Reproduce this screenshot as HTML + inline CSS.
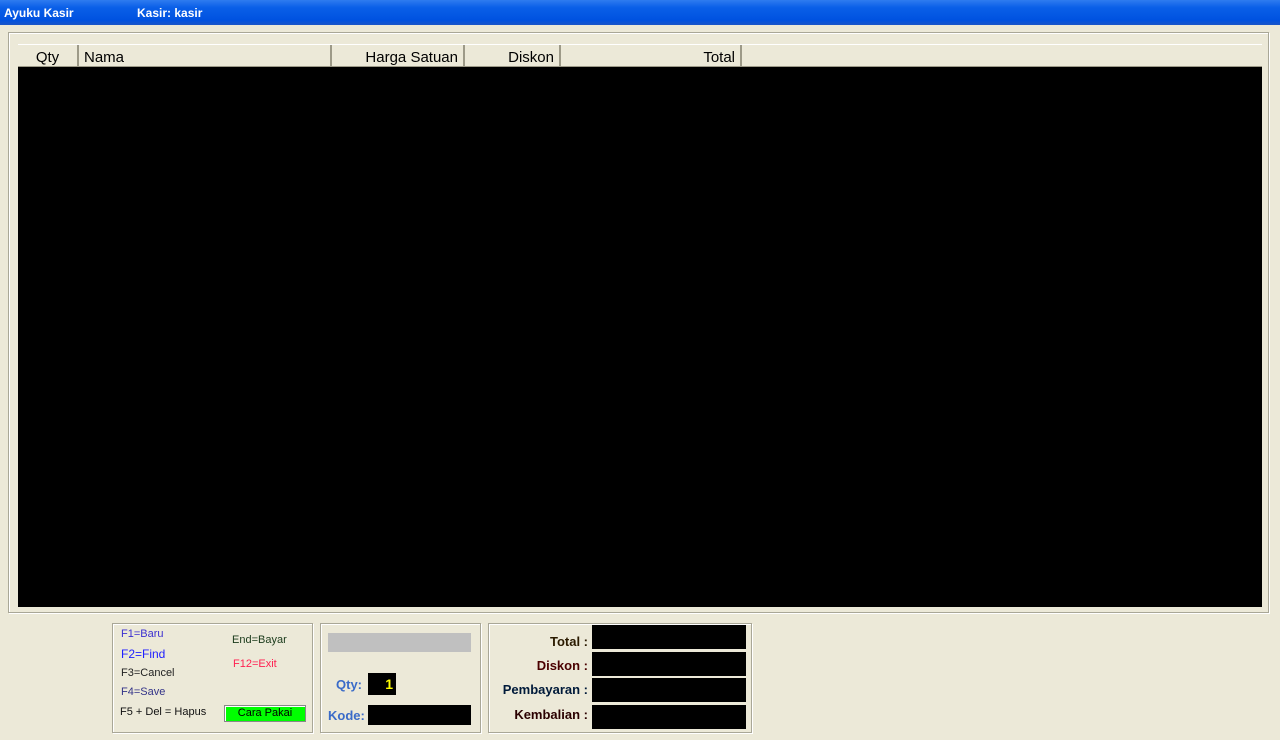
<!DOCTYPE html>
<html><head><style>
body{margin:0;width:1280px;height:740px;background:#ece9d8;position:relative;overflow:hidden;font-family:"Liberation Sans",Tahoma,sans-serif;}
.a{position:absolute;}
.title{left:0;top:0;width:1280px;height:25px;background:linear-gradient(#2f7cf0,#0a5fe8 30%,#0052e0 80%,#1a55c8);color:#fff;font-weight:bold;font-size:12px;}
.box{border:1px solid #a9a797;box-shadow:inset 1px 1px 0 #fff,1px 1px 0 #fff;}
.hd{top:44px;height:21px;background:#ece9d8;border-top:1px solid #fff;border-bottom:2px solid #9d9a88;font-size:15px;color:#000;}
.hd div{position:absolute;top:0;height:21px;line-height:25px;border-right:2px solid #9d9a88;box-sizing:border-box;padding:0 5px;}
.k{font-size:11px;}
.lbl{font-weight:bold;font-size:13px;text-align:right;width:96px;left:0;}
.blk{background:#000;}
</style></head><body>
<div class="a title"><span class="a" style="left:4px;top:6px">Ayuku Kasir</span><span class="a" style="left:137px;top:6px">Kasir: kasir</span></div>
<div class="a box" style="left:8px;top:32px;width:1259px;height:579px"></div>
<div class="a hd" style="left:18px;width:1244px">
 <div style="left:0;width:61px;text-align:center">Qty</div>
 <div style="left:61px;width:253px;">Nama</div>
 <div style="left:314px;width:133px;text-align:right">Harga Satuan</div>
 <div style="left:447px;width:96px;text-align:right">Diskon</div>
 <div style="left:543px;width:181px;text-align:right">Total</div>
</div>
<div class="a blk" style="left:18px;top:67px;width:1244px;height:540px"></div>

<div class="a box" style="left:112px;top:623px;width:199px;height:108px"></div>
<div class="a k" style="left:121px;top:628px;color:#3b2fd0">F1=Baru</div>
<div class="a k" style="left:121px;top:647px;color:#2020ff;font-size:12px">F2=Find</div>
<div class="a k" style="left:121px;top:667px;color:#222">F3=Cancel</div>
<div class="a k" style="left:121px;top:686px;color:#333388">F4=Save</div>
<div class="a k" style="left:120px;top:706px;color:#111">F5 + Del = Hapus</div>
<div class="a k" style="left:232px;top:634px;color:#1a3a1a">End=Bayar</div>
<div class="a k" style="left:233px;top:658px;color:#ff2050">F12=Exit</div>
<div class="a k" style="left:224px;top:705px;width:80px;height:15px;background:#00ff00;border:1px solid #888;box-shadow:inset 1px 1px 0 #fff;text-align:center;line-height:15px;color:#000">Cara Pakai</div>

<div class="a box" style="left:320px;top:623px;width:159px;height:108px"></div>
<div class="a" style="left:328px;top:633px;width:143px;height:19px;background:#c0c0c0"></div>
<div class="a" style="left:336px;top:677px;font-weight:bold;font-size:13px;color:#3a6bc8">Qty:</div>
<div class="a blk" style="left:368px;top:673px;width:28px;height:22px;color:#ffff00;font-weight:bold;font-size:14px;text-align:right;line-height:22px;box-sizing:border-box;padding-right:3px">1</div>
<div class="a" style="left:328px;top:708px;font-weight:bold;font-size:13px;color:#3a6bc8">Kode:</div>
<div class="a blk" style="left:368px;top:705px;width:103px;height:20px"></div>

<div class="a box" style="left:488px;top:623px;width:262px;height:108px"></div>
<div class="a lbl" style="left:492px;top:634px;color:#2a1a00">Total :</div>
<div class="a lbl" style="left:492px;top:658px;color:#4a0000">Diskon :</div>
<div class="a lbl" style="left:492px;top:682px;color:#001a3a">Pembayaran :</div>
<div class="a lbl" style="left:492px;top:707px;color:#2a0000">Kembalian :</div>
<div class="a blk" style="left:592px;top:625px;width:154px;height:24px"></div>
<div class="a blk" style="left:592px;top:652px;width:154px;height:24px"></div>
<div class="a blk" style="left:592px;top:678px;width:154px;height:24px"></div>
<div class="a blk" style="left:592px;top:705px;width:154px;height:24px"></div>
</body></html>
